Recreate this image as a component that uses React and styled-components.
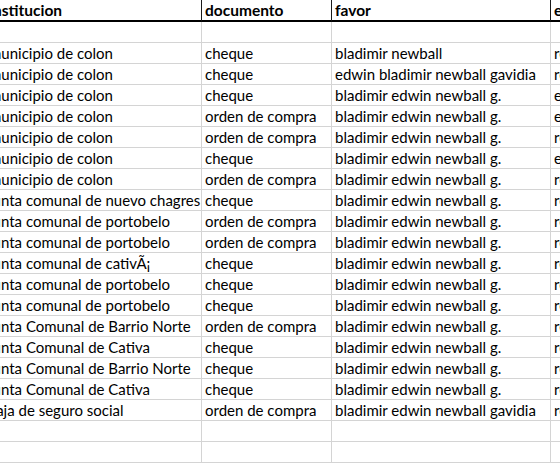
import React from "react";
import styled, { createGlobalStyle } from "styled-components";

const GlobalStyle = createGlobalStyle`
  html, body {
    margin: 0;
    padding: 0;
    background: #fff;
  }
`;

const rows = [
  ["municipio de colon", "cheque", "bladimir newball", "recibido"],
  ["municipio de colon", "cheque", "edwin bladimir newball gavidia", "recibido"],
  ["municipio de colon", "cheque", "bladimir edwin newball g.", "entregado"],
  ["municipio de colon", "orden de compra", "bladimir edwin newball g.", "entregado"],
  ["municipio de colon", "orden de compra", "bladimir edwin newball g.", "recibido"],
  ["municipio de colon", "cheque", "bladimir edwin newball g.", "entregado"],
  ["municipio de colon", "orden de compra", "bladimir edwin newball g.", "recibido"],
  ["junta comunal de nuevo chagres", "cheque", "bladimir edwin newball g.", "recibido"],
  ["junta comunal de portobelo", "orden de compra", "bladimir edwin newball g.", "recibido"],
  ["junta comunal de portobelo", "orden de compra", "bladimir edwin newball g.", "recibido"],
  ["junta comunal de cativÃ¡", "cheque", "bladimir edwin newball g.", "recibido"],
  ["junta comunal de portobelo", "cheque", "bladimir edwin newball g.", "recibido"],
  ["junta comunal de portobelo", "cheque", "bladimir edwin newball g.", "recibido"],
  ["junta Comunal de Barrio Norte", "orden de compra", "bladimir edwin newball g.", "recibido"],
  ["junta Comunal de Cativa", "cheque", "bladimir edwin newball g.", "recibido"],
  ["junta Comunal de Barrio Norte", "cheque", "bladimir edwin newball g.", "recibido"],
  ["junta Comunal de Cativa", "cheque", "bladimir edwin newball g.", "recibido"],
  ["caja de seguro social", "orden de compra", "bladimir edwin newball gavidia", "recibido"],
];

const headers = ["institucion", "documento", "favor", "estado"];

// the sheet is scrolled a little to the right, so the first column is cut
const Viewport = styled.div`
  width: 560px;
  height: 463px;
  overflow: hidden;
  background: #fff;
`;

const Sheet = styled.div`
  display: grid;
  grid-template-columns: 216px 130px 219px 160px;
  width: 725px;
  margin-left: -14px;
  font-family: "Lato", "Open Sans", sans-serif;
  font-size: 15px;
  color: #000;
`;

const Cell = styled.div`
  box-sizing: border-box;
  height: ${(p) => (p.$header ? "22px" : "21px")};
  display: flex;
  align-items: flex-end;
  padding: 0 3px ${(p) => (p.$header ? "1px" : "1px")};
  white-space: nowrap;
  overflow: hidden;
  border-right: 1px solid ${(p) => (p.$header ? "#1a1a1a" : "#d4d4d4")};
  border-bottom: ${(p) => (p.$header ? "2px solid #000" : "1px solid #d4d4d4")};
  font-weight: ${(p) => (p.$header ? 700 : 400)};
  font-size: ${(p) => (p.$header ? "15.5px" : "15px")};
`;

export default function App() {
  const blank = ["", "", "", ""];
  const body = [blank, ...rows, blank, blank];
  return (
    <Viewport>
      <GlobalStyle />
      <Sheet>
        {headers.map((h) => (
          <Cell key={h} $header>
            {h}
          </Cell>
        ))}
        {body.map((r, i) =>
          r.map((c, j) => <Cell key={i + "-" + j}>{c}</Cell>)
        )}
      </Sheet>
    </Viewport>
  );
}
